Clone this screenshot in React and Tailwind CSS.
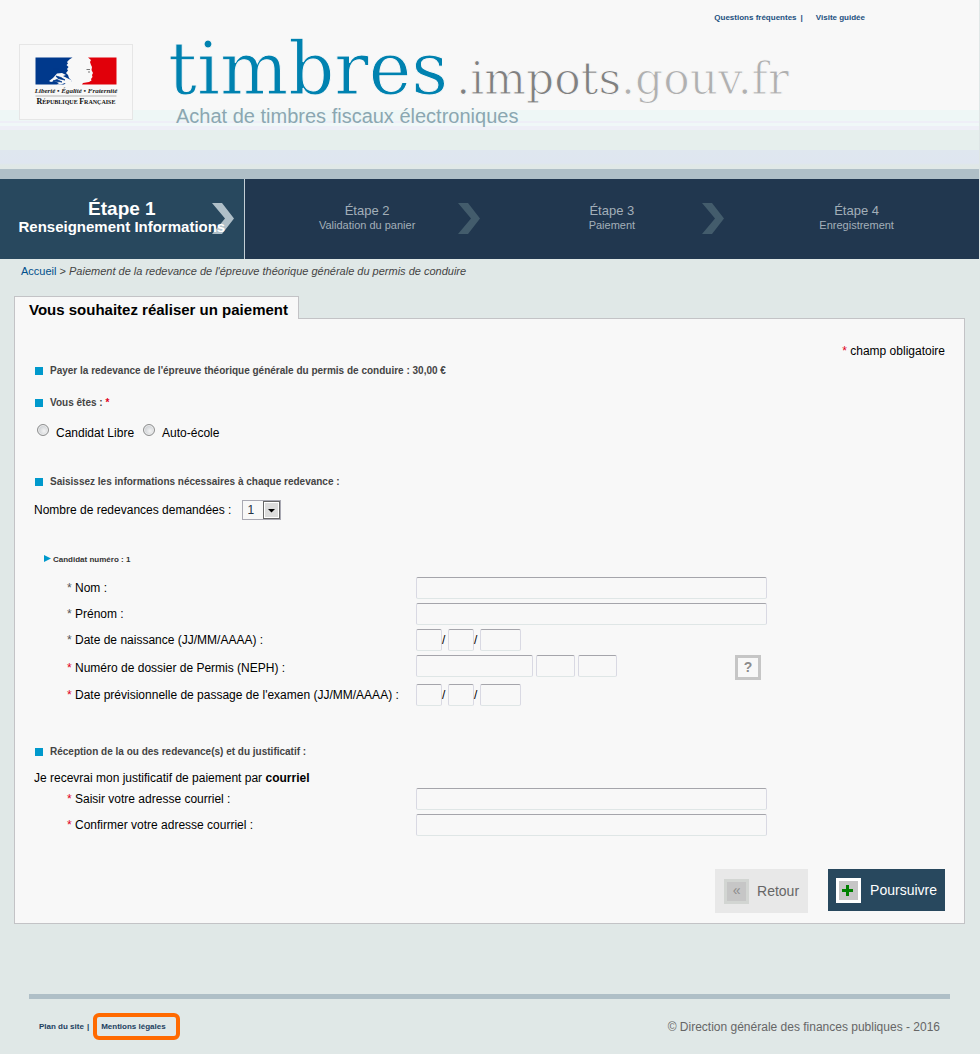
import React from "react";

const field =
  "h-[22px] rounded-[2px] border border-[#d9d9e3] border-t-[#a5a5ab] border-b-[#dfe6e6] bg-[#f8f8f8] px-1 text-[12px] text-black";

function Chevron({ className }) {
  return (
    <svg
      className={"absolute right-[10px] top-[24px] h-[31px] w-[22px] " + className}
      viewBox="0 0 22 31"
      fill="currentColor"
      aria-hidden="true"
    >
      <path d="M0 0H10L22 15.5L10 31H0L13 15.5Z" />
    </svg>
  );
}

function Emblem() {
  return (
    <svg className="h-[74px] w-[112px]" viewBox="0 0 112 74" role="img" aria-label="République Française">
      <path
        d="M15.500 12.500H52.500Q49 14 47 17L48 18.500L46.500 20L48.500 22L47 24L48 25.500L46 28L48 30L49 33L52 36L50 38L47 37L44 39.500H15.500Z"
        fill="#00398c"
      />
      <path
        d="M29 36L33 33L37 28.500L42 28L46 30L43 31L49 34L53 36L51 37L53 38L49 39.500L45 38L41 39.500H37L39 38L34 36L31 37Z"
        fill="#f8f8f8"
      />
      <path d="M33 24H39M36 31L41 32.500L45 35L38 33.500ZM33 36L37 34.500L42 37L38 36.500Z" stroke="#00398c" strokeWidth=".8" fill="#00398c" />
      <path
        d="M68 12.500H96.500V39.500H62L63 38L69 37L71.500 35.500L71 34L72.500 32L72 30L73 28L71.500 25L72 22L71 20L70 17L71 15Z"
        fill="#e1000a"
      />
      <path d="M66.500 24.500H70M69 26V28" stroke="#777" strokeWidth="1" />
      <text x="56" y="48" textAnchor="middle" fontSize="7" fontStyle="italic" fontWeight="700" fontFamily="'Liberation Serif', serif" fill="#222">
        Liberté • Égalité • Fraternité
      </text>
      <path d="M15.500 51H96.500" stroke="#999" strokeWidth=".7" />
      <text x="56" y="59" textAnchor="middle" fontWeight="700" fontFamily="'Liberation Serif', serif" fill="#111">
        <tspan fontSize="8">R</tspan>
        <tspan fontSize="6">ÉPUBLIQUE </tspan>
        <tspan fontSize="8">F</tspan>
        <tspan fontSize="6">RANÇAISE</tspan>
      </text>
    </svg>
  );
}

function Step({ title, label, last }) {
  return (
    <li className="relative pt-[24px] text-center text-[#a3afb9]">
      {!last && <Chevron className="text-[#435c6c]" />}
      <div className="relative text-[13px] leading-[16px]">{title}</div>
      <div className="relative text-[11px] leading-[12px]">{label}</div>
    </li>
  );
}

function Section({ children, className }) {
  return (
    <h2 className={"flex items-center gap-[7px] text-[10px] leading-[18px] font-bold text-[#444] " + className}>
      <span className="ml-px size-[8px] bg-[#0099cc]" />
      <span>{children}</span>
    </h2>
  );
}

function Row({ id, label, plain, children }) {
  return (
    <div className="grid grid-cols-[349px_1fr] items-center">
      <label htmlFor={id} className="whitespace-nowrap">
        <span className={plain ? "text-[#555]" : "text-[#e00020]"}>*</span> {label}
      </label>
      <div className="flex items-start">{children}</div>
    </div>
  );
}

function DateFields({ id }) {
  return (
    <>
      <input id={id} aria-label="Jour" className={field + " w-[26px]"} />
      <span className="w-[6px] leading-[22px]">/</span>
      <input aria-label="Mois" className={field + " w-[26px]"} />
      <span className="w-[6px] leading-[22px]">/</span>
      <input aria-label="Année" className={field + " w-[41px]"} />
    </>
  );
}

const radio =
  "size-[12px] appearance-none rounded-full border border-[#8e8f8f] bg-[radial-gradient(circle_at_60%_60%,#f4f4f4,#b9bec4)] shadow-[inset_0_0_0_1px_#eee] checked:bg-[#245]";

export default function App() {
  return (
    <div className="min-h-screen bg-[#e0e8e7] font-['Liberation_Sans',Arial,sans-serif] text-[12px] text-black">
      <header className="mr-px h-[179px] border-b-[10px] border-[#afbfc7] bg-[linear-gradient(#f8f8f8_110px,#eef7f6_110px,#eef7f6_121px,#eeeff7_121px,#eeeff7_123px,#f0f8f8_123px,#f0f8f8_126px,#eeeff7_126px,#eeeff7_130px,#e6efed_130px,#e6efed_150px,#dfe7ef_150px,#dfe6f0_163px,#e0e8e7_165px)]">
        <nav className="flex justify-end pt-[12px] pr-[114px] text-[8px] leading-[12px] font-bold text-[#1c5080]">
          <a href="#faq">Questions fréquentes</a>
          <span className="ml-[4px] mr-[13px]">|</span>
          <a href="#visite">Visite guidée</a>
        </nav>
        <div className="flex pt-[20px] pl-[19px]">
          <a href="#accueil" className="h-[76px] w-[114px] border border-[#e6e6e6] bg-[#f8f8f8]">
            <Emblem />
          </a>
          <div className="ml-[35px]">
            <h1 className="flex items-baseline font-['DejaVu_Serif',serif] text-[44px] leading-[50px] whitespace-nowrap [-webkit-text-stroke:1px_#f8f8f8]">
              <span className="mr-[8px] text-[72px] text-[#0082b0]">timbres</span>
              <span className="text-[#808080]">.impots</span>
              <span className="text-[#b0b0b0]">.gouv.fr</span>
            </h1>
            <p className="pl-[8px] text-[20px] leading-[24px] text-[#8aa7b1]">
              Achat de timbres fiscaux électroniques
            </p>
          </div>
        </div>
      </header>

      <ol className="mr-px grid h-[80px] grid-cols-4 bg-[#21374f]">
        <li className="relative border-r border-[#c3ced5] bg-[#28485e] pt-[20px] text-center font-bold whitespace-nowrap text-white">
          <Chevron className="text-[#afbfc8]" />
          <div className="relative text-[19px] leading-[20px]">Étape 1</div>
          <div className="relative text-[15px] leading-[16px]">Renseignement Informations</div>
        </li>
        <Step title="Étape 2" label="Validation du panier" />
        <Step title="Étape 3" label="Paiement" />
        <Step title="Étape 4" label="Enregistrement" last />
      </ol>

      <p className="pt-[4px] pl-[21px] text-[11px] leading-[16px] text-[#444]">
        <a href="#accueil" className="text-[#00508c]">Accueil</a> &gt;{" "}
        <em>Paiement de la redevance de l'épreuve théorique générale du permis de conduire</em>
      </p>

      <main className="mt-[17px] mr-[15px] ml-[14px]">
        <h2 className="relative -mb-px w-fit border border-b-0 border-[#c3c3c6] bg-[#f8f8f8] pt-[4px] pr-[10px] pl-[14px] text-[15px] leading-[18px] font-bold">
          Vous souhaitez réaliser un paiement
        </h2>
        <form className="border border-[#c3c3c6] bg-[#f8f8f8] px-[19px] pt-[23px] pb-[10px] leading-[18px]">
          <p className="text-right">
            <span className="text-[#e00020]">*</span> champ obligatoire
          </p>
          <Section className="mt-[2px]">
            Payer la redevance de l'épreuve théorique générale du permis de conduire : 30,00 €
          </Section>
          <Section className="mt-[14px]">
            Vous êtes : <span className="text-[#e00020]">*</span>
          </Section>
          <div className="mt-[12px] flex items-start pl-[3px]">
            <input type="radio" name="type" id="libre" className={radio} />
            <label htmlFor="libre" className="mr-[9px] ml-[7px]">Candidat Libre</label>
            <input type="radio" name="type" id="ecole" className={radio} />
            <label htmlFor="ecole" className="ml-[7px]">Auto-école</label>
          </div>
          <Section className="mt-[31px]">Saisissez les informations nécessaires à chaque redevance :</Section>
          <div className="mt-[9px] flex items-center">
            <label htmlFor="nombre">Nombre de redevances demandées :</label>
            <span className="relative ml-[11px] flex">
              <select id="nombre" className="h-[20px] w-[39px] appearance-none border border-[#a9a9b3] bg-[#f8f8f8] pl-[4px] text-[12px] text-[#234]">
                <option>1</option>
                <option>2</option>
                <option>3</option>
              </select>
              <svg className="pointer-events-none absolute top-[1px] right-[1px] h-[18px] w-[17px]" viewBox="0 0 17 18" aria-hidden="true">
                <rect x=".5" y=".5" width="16" height="17" fill="#fff" stroke="#666" />
                <rect x="2" y="2" width="13" height="14" fill="#dcdcdc" />
                <path d="M5 8H12L8.500 11.500Z" fill="#000" />
              </svg>
            </span>
          </div>

          <h3 className="mt-[31px] flex items-center gap-[2px] pl-[10px] text-[8px] font-bold text-[#333]">
            <svg className="h-[10px] w-[7px]" viewBox="0 0 7 10" aria-hidden="true">
              <path d="M0 0L7 3.500L0 7Z" fill="#0099cc" />
            </svg>
            Candidat numéro : 1
          </h3>
          <div className="mt-[8px] flex flex-col gap-[4px] pl-[33px]">
            <Row id="nom" label="Nom :" plain>
              <input id="nom" className={field + " w-[351px]"} />
            </Row>
            <Row id="prenom" label="Prénom :" plain>
              <input id="prenom" className={field + " w-[351px]"} />
            </Row>
            <Row id="naissance" label="Date de naissance (JJ/MM/AAAA) :" plain>
              <DateFields id="naissance" />
            </Row>
            <Row id="neph" label="Numéro de dossier de Permis (NEPH) :">
              <input id="neph" className={field + " w-[117px]"} />
              <input aria-label="NEPH, partie 2" className={field + " ml-[3px] w-[39px]"} />
              <input aria-label="NEPH, partie 3" className={field + " ml-[3px] w-[39px]"} />
              <button type="button" className="ml-[118px] h-[25px] w-[26px] border-[3px] border-[#c6c6c6] text-[14px] leading-[19px] font-bold text-[#8c8c8c]">
                ?
              </button>
            </Row>
            <Row id="examen" label="Date prévisionnelle de passage de l'examen (JJ/MM/AAAA) :">
              <DateFields id="examen" />
            </Row>
          </div>

          <Section className="mt-[37px]">Réception de la ou des redevance(s) et du justificatif :</Section>
          <p className="mt-[8px]">
            Je recevrai mon justificatif de paiement par <strong>courriel</strong>
          </p>
          <div className="mt-[1px] flex flex-col gap-[4px] pl-[33px]">
            <Row id="mail" label="Saisir votre adresse courriel :">
              <input id="mail" type="email" className={field + " w-[351px]"} />
            </Row>
            <Row id="mail2" label="Confirmer votre adresse courriel :">
              <input id="mail2" type="email" className={field + " w-[351px]"} />
            </Row>
          </div>

          <div className="mt-[33px] flex items-start justify-end gap-[20px] text-[14px]">
            <button type="button" className="flex h-[44px] items-center gap-[8px] bg-[#e8e8e8] px-[9px] text-[#666]">
              <span className="size-[25px] border-[3px] border-[#d2d5d2] bg-[#c6c6c6] leading-[16px] text-[#8c8c8c]">«</span>
              Retour
            </button>
            <button type="submit" className="flex h-[42px] items-center gap-[9px] bg-[#28485e] px-[8px] text-white">
              <svg className="size-[25px]" viewBox="0 0 25 25" aria-hidden="true">
                <path d="M0 0H25V25H0Z" fill="#fff" />
                <path d="M3 3H22V22H3Z" fill="#c6c6c6" />
                <path d="M6 11H10V7H13V11H17V14H13V18H10V14H6Z" fill="#008000" />
              </svg>
              Poursuivre
            </button>
          </div>
        </form>
      </main>

      <footer className="mt-[70px] mr-[30px] ml-[29px] flex items-center justify-between border-t-[5px] border-[#afbfc7] pt-[14px] pr-[10px] pb-[14px] pl-[10px]">
        <nav className="flex items-center text-[8px] font-bold text-[#1c4060]">
          <a href="#plan">Plan du site</a>
          <span className="mr-[4px] ml-[3px]">|</span>
          <a href="#mentions" className="flex h-[27px] w-[87px] items-center rounded-[6px] border-[4px] border-[#ff6a00] pl-[4px]">
            Mentions légales
          </a>
        </nav>
        <p className="text-[12px] text-[#666]">© Direction générale des finances publiques - 2016</p>
      </footer>
    </div>
  );
}
